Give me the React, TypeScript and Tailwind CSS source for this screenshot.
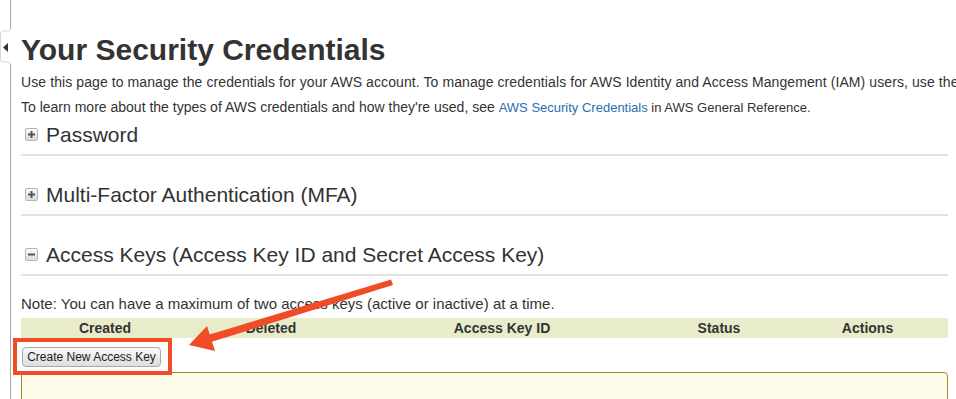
import React from 'react';

const font = { fontFamily: '"Liberation Sans", Arial, Helvetica, sans-serif' };

const Toggle: React.FC<{ open?: boolean }> = ({ open }) => (
  <span className="inline-flex h-[13px] w-[13px] items-center justify-center rounded-[2px] border border-[#b5b5b5] bg-gradient-to-b from-[#fbfbfb] to-[#dcdcdc]">
    <svg width="9" height="9" viewBox="0 0 9 9">
      <rect x="1" y="3.5" width="7" height="2" fill="#555" />
      {!open && <rect x="3.5" y="1" width="2" height="7" fill="#555" />}
    </svg>
  </span>
);

const Section: React.FC<{ title: string; open?: boolean; className?: string }> = ({ title, open, className }) => (
  <div className={`border-b-2 border-[#e2e2e2] pb-[7px] ${className ?? ''}`}>
    <div className="flex h-[24px] items-center">
      <span className="ml-[4px] mr-[8px] -mt-[2px] flex">
        <Toggle open={open} />
      </span>
      <h2 className="text-[21px] leading-[24px] text-[#333]">{title}</h2>
    </div>
  </div>
);

const App: React.FC = () => {
  const columns = ['Created', 'Deleted', 'Access Key ID', 'Status', 'Actions'];

  return (
    <div className="relative h-[399px] w-[956px] overflow-hidden bg-white text-[#333]" style={font}>
      {/* left rail with collapse tab */}
      <svg className="absolute left-0 top-0" width="14" height="399" viewBox="0 0 14 399">
        <line x1="10.5" y1="0" x2="10.5" y2="29" stroke="#a8a8a8" />
        <path d="M10.5 29 Q10.5 31 8 31 L3 31 Q0.5 31 0.5 34 L0.5 59 Q0.5 62 3 62 L8 62 Q10.5 62 10.5 64" fill="none" stroke="#d6d6d6" />
        <line x1="10.5" y1="64" x2="10.5" y2="399" stroke="#a8a8a8" />
        <polygon points="3,47.5 8,43 8,52" fill="#333" />
      </svg>

      <div className="pl-[21px] pr-[8px] pt-[32px]">
        <h1 className="whitespace-nowrap text-[30px] font-bold leading-[36px] text-[#333]">Your Security Credentials</h1>
        <div className="mt-[2px] whitespace-nowrap text-[14px] leading-[25px]">
          <p className="tracking-[0.09px]">
            Use this page to manage the credentials for your AWS account. To manage credentials for AWS Identity and Access
            Mangement (IAM) users, use the IAM Console.
          </p>
          <p>
            To learn more about the types of AWS credentials and how they're used, see{' '}
            <a className="text-[13px] text-[#2a6db3]">AWS Security Credentials</a>
            <span className="text-[13px]"> in AWS General Reference.</span>
          </p>
        </div>

        <Section title="Password" className="mt-[3px]" />
        <Section title="Multi-Factor Authentication (MFA)" className="mt-[27px]" />
        <Section title="Access Keys (Access Key ID and Secret Access Key)" open className="mt-[27px]" />

        <p className="mt-[18px] whitespace-nowrap text-[15px] leading-[20px]">
          Note: You can have a maximum of two access keys (active or inactive) at a time.
        </p>

        <div className="mt-[4px] grid h-[20px] grid-cols-[168px_164px_298px_136px_1fr] bg-[#e9ecca] text-[14px] font-bold leading-[20px]">
          {columns.map((c) => (
            <div key={c} className="text-center">
              {c}
            </div>
          ))}
        </div>

        <button className="ml-px mt-[9px] flex h-[20px] w-[139px] items-center justify-center rounded-[4px] border border-[#a9a9a9] bg-gradient-to-b from-[#fafafa] to-[#dedede] text-[12px] text-[#222]">
          Create New Access Key
        </button>

        <div className="mt-[5px] h-[60px] rounded-[4px] border border-[#a3882b] bg-[#fffbe9]" />
      </div>

      {/* annotation: highlight box */}
      <div className="absolute left-[13px] top-[338px] h-[37px] w-[159px] border-4 border-[#f04c27]" />

      {/* annotation: arrow */}
      <svg className="absolute left-0 top-0" width="956" height="399" viewBox="0 0 956 399">
        <polygon points="391,279.5 393,285 211,342 208,335" fill="#f04c27" />
        <polygon points="189,345 207,326 215,351" fill="#f04c27" />
      </svg>
    </div>
  );
};

export default App;
